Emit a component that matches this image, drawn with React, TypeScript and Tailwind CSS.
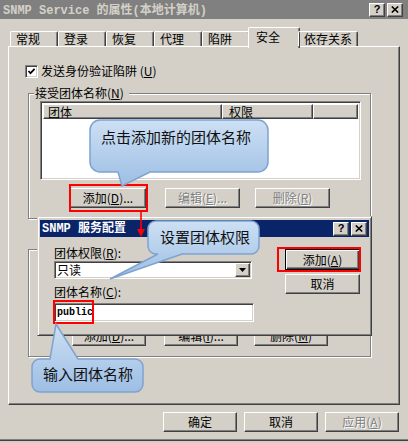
import clsx from "clsx";
import type { ReactNode } from "react";

const raised =
  "border border-t-white border-l-white border-r-[#404040] border-b-[#404040] shadow-[inset_-1px_-1px_#808080]";
const sunken =
  "border border-t-[#808080] border-l-[#808080] border-r-white border-b-white shadow-[inset_1px_1px_#404040,inset_-1px_-1px_#d4d0c8]";
const etched = "border border-[#808080] shadow-[inset_1px_1px_#fff,1px_1px_#fff]";

function Button({
  children,
  w,
  h = "h-[20px]",
  disabled = false,
  primary = false,
}: {
  children: ReactNode;
  w: string;
  h?: string;
  disabled?: boolean;
  primary?: boolean;
}) {
  return (
    <div
      className={clsx(
        "flex items-center justify-center bg-[#d4d0c8] leading-none text-[12px]",
        w,
        h,
        primary
          ? "border border-black shadow-[inset_1px_1px_#fff,inset_-1px_-1px_#404040,inset_-2px_-2px_#808080]"
          : raised,
        disabled && "text-[#808080] [text-shadow:1px_1px_0_#fff]"
      )}
    >
      {children}
    </div>
  );
}

function CaptionButtons() {
  return (
    <div className="ml-auto flex gap-[2px]">
      <div className={clsx("w-[16px] h-[14px] bg-[#d4d0c8] flex items-center justify-center", raised)}>
        <span className="font-bold text-[11px] leading-none font-['Liberation_Sans',sans-serif]">?</span>
      </div>
      <div className={clsx("w-[16px] h-[14px] bg-[#d4d0c8] flex items-center justify-center", raised)}>
        <svg width="8" height="7" viewBox="0 0 8 7">
          <path d="M0.8 0.5 L7.2 6.5 M7.2 0.5 L0.8 6.5" stroke="#000" strokeWidth="1.6" />
        </svg>
      </div>
    </div>
  );
}

const tabs = ["常规", "登录", "恢复", "代理", "陷阱", "安全", "依存关系"];

function HeaderCell({ children, w }: { children?: ReactNode; w: string }) {
  return (
    <div className={clsx("h-full bg-[#d4d0c8] flex items-center pl-[4px] leading-none", w, raised)}>
      {children}
    </div>
  );
}

export default function App() {
  return (
    <div className="relative w-[408px] h-[443px] overflow-hidden bg-[#d4d0c8] text-black text-[12px] font-['Noto_Sans_CJK_SC',sans-serif]">
      {/* title bar */}
      <div className="h-[19px] bg-[#808080] flex items-center pl-[3px] pr-[5px]">
        <span className="pt-[3px] font-bold text-[#d4d0c8] text-[12px] leading-none font-['Liberation_Mono','Noto_Sans_CJK_SC',monospace]">
          SNMP Service 的属性(本地计算机)
        </span>
        <CaptionButtons />
      </div>

      {/* tabs */}
      <div className="relative z-10 flex items-end h-[19px] mt-[8px] pl-[10px]">
        {tabs.map((t) =>
          t === "安全" ? (
            <div
              key={t}
              className="w-[52px] h-[21px] -mx-[2px] -mb-[2px] bg-[#d4d0c8] rounded-t-[2px] border-l border-t border-r border-white border-r-[#404040] shadow-[inset_-1px_0_#808080] pl-[7px] pt-[2px] leading-[14px]"
            >
              {t}
            </div>
          ) : (
            <div
              key={t}
              className={clsx(
                "h-[15px] rounded-t-[2px] border-l border-t border-r border-white border-r-[#404040] shadow-[inset_-1px_0_#808080] pl-[5px] flex items-center leading-none",
                t === "依存关系" ? "w-[60px]" : "w-[48px]"
              )}
            >
              {t}
            </div>
          )
        )}
      </div>

      {/* tab panel */}
      <div className="ml-[8px] w-[392px] h-[359px] border-l border-t border-r border-b border-white border-r-[#404040] border-b-[#404040] shadow-[inset_-1px_-1px_#808080] pt-[17px] pl-[16px]">
        <div className="flex items-center h-[14px] gap-[3px]">
          <div className={clsx("w-[13px] h-[13px] bg-white flex items-center justify-center", sunken)}>
            <svg width="9" height="9" viewBox="0 0 9 9">
              <path d="M1.5 4 L3.5 6.2 L7.6 1.8" stroke="#000" strokeWidth="1.7" fill="none" />
            </svg>
          </div>
          <span className="leading-none">
            发送身份验证陷阱 (<u>U</u>)
          </span>
        </div>

        {/* group 1 */}
        <div className={clsx("mt-[15px] ml-[3px] w-[343px] pb-[10px]", etched)}>
          <div className="w-fit -mt-[8px] ml-[5px] pl-[1px] pr-[5px] leading-[14px] bg-[#d4d0c8]">
            接受团体名称(<u>N</u>)
          </div>
          <div className={clsx("ml-[11px] mt-[1px] w-[321px] h-[79px] bg-white p-[2px]", sunken)}>
            <div className="flex h-[15px]">
              <HeaderCell w="w-[179px]">团体</HeaderCell>
              <HeaderCell w="w-[91px]">
                <span className="pl-[2px]">权限</span>
              </HeaderCell>
              <HeaderCell w="flex-1" />
            </div>
          </div>
          <div className="flex mt-[8px] ml-[41px]">
            <Button w="w-[76px]">
              添加(<u>D</u>)...
            </Button>
            <div className="ml-[19px]">
              <Button w="w-[75px]" disabled>
                编辑(<u>E</u>)...
              </Button>
            </div>
            <div className="ml-[15px]">
              <Button w="w-[75px]" disabled>
                删除(<u>R</u>)
              </Button>
            </div>
          </div>
        </div>

        {/* group 2 (mostly covered) */}
        <div className={clsx("mt-[30px] ml-[3px] w-[343px] h-[108px] flex flex-col justify-end pb-[10px]", etched)}>
          <div className="flex ml-[43px]">
            <Button w="w-[74px]">
              添加(<u>D</u>)...
            </Button>
            <div className="ml-[18px]">
              <Button w="w-[74px]">
                编辑(<u>I</u>)...
              </Button>
            </div>
            <div className="ml-[16px]">
              <Button w="w-[74px]">
                删除(<u>M</u>)
              </Button>
            </div>
          </div>
        </div>
      </div>

      {/* bottom buttons */}
      <div className="flex justify-end gap-[7px] pr-[9px] mt-[7px]">
        <Button w="w-[74px]">确定</Button>
        <Button w="w-[74px]">取消</Button>
        <Button w="w-[74px]" disabled>
          应用(<u>A</u>)
        </Button>
      </div>
      <div className="mt-[7px] h-[2px] border-t border-b border-t-[#808080] border-b-[#404040]" />

      {/* SNMP service config dialog */}
      <div className="absolute z-20 left-[37px] top-[216px] w-[335px] h-[120px] bg-[#d4d0c8] border border-t-[#d4d0c8] border-l-[#d4d0c8] border-r-[#404040] border-b-[#404040] shadow-[inset_1px_1px_#fff,inset_-1px_-1px_#808080] px-[2px] pt-[3px]">
        <div className="h-[17px] bg-[#0a246a] flex items-center pl-[2px] pr-[2px]">
          <span className="text-white font-bold text-[12px] leading-none font-['Liberation_Mono','Noto_Sans_CJK_SC',monospace]">
            SNMP 服务配置
          </span>
          <CaptionButtons />
        </div>
        <div className="flex pl-[14px]">
          <div className="w-[200px] pt-[9px]">
            <div className="leading-[14px]">
              团体权限(<u>R</u>):
            </div>
            <div className={clsx("mt-[1px] w-[198px] h-[18px] bg-white flex items-center pl-[2px] pr-[1px]", sunken)}>
              <span className="leading-none">只读</span>
              <div className={clsx("ml-auto w-[15px] h-[14px] bg-[#d4d0c8] flex items-center justify-center", raised)}>
                <svg width="7" height="4" viewBox="0 0 7 4">
                  <path d="M0 0 H7 L3.5 4 Z" fill="#000" />
                </svg>
              </div>
            </div>
            <div className="mt-[6px] leading-[14px]">
              团体名称(<u>C</u>):
            </div>
            <div className={clsx("mt-[4px] w-[200px] h-[19px] bg-white flex items-center pl-[2px]", sunken)}>
              <span className="font-bold text-[10px] leading-none font-['Liberation_Mono',monospace]">public</span>
            </div>
          </div>
          <div className="ml-[31px] pt-[12px] w-[75px]">
            <Button w="w-[75px]" h="h-[21px]" primary>
              添加(<u>A</u>)
            </Button>
            <div className="mt-[4px]">
              <Button w="w-[75px]">取消</Button>
            </div>
          </div>
        </div>
      </div>

      {/* red highlight boxes */}
      <div className="absolute z-30 left-[69px] top-[184px] w-[79px] h-[28px] border-2 border-[#f00]" />
      <div className="absolute z-30 left-[277px] top-[247px] w-[84px] h-[25px] border-2 border-[#f00]" />
      <div className="absolute z-30 left-[53px] top-[300px] w-[41px] h-[24px] border-2 border-[#f00]" />

      {/* red arrow */}
      <svg className="absolute z-30 left-[134px] top-[211px]" width="14" height="28" viewBox="0 0 14 28">
        <path d="M7 1 V20" stroke="#f00" strokeWidth="1.6" />
        <path d="M3 18 H11 L7 26 Z" fill="#f00" />
      </svg>

      {/* callout 1 */}
      <div className="absolute z-40 left-[88px] top-[118px] w-[182px] h-[70px]">
        <svg className="absolute inset-0" width="182" height="70" viewBox="0 0 182 70">
          <defs>
            <linearGradient id="c1" x1="0" y1="0" x2="0" y2="1">
              <stop offset="0" stopColor="#cde0f4" />
              <stop offset="1" stopColor="#9dbee4" />
            </linearGradient>
          </defs>
          <path
            d="M12 2 H170 A10 10 0 0 1 180 12 V44 A10 10 0 0 1 170 54 H62 L34 68 L30 54 H12 A10 10 0 0 1 2 44 V12 A10 10 0 0 1 12 2 Z"
            fill="url(#c1)"
            stroke="#7ea3cf"
            strokeWidth="1.5"
          />
        </svg>
        <span className="absolute left-[13px] top-[11px] text-[15px] leading-[16px] text-[#111]">点击添加新的团体名称</span>
      </div>

      {/* callout 2 */}
      <div className="absolute z-40 left-[106px] top-[219px] w-[156px] h-[63px]">
        <svg className="absolute inset-0" width="156" height="63" viewBox="0 0 156 63">
          <defs>
            <linearGradient id="c2" x1="0" y1="0" x2="0" y2="1">
              <stop offset="0" stopColor="#cde0f4" />
              <stop offset="1" stopColor="#9dbee4" />
            </linearGradient>
          </defs>
          <path
            d="M50 2 H145 A8 8 0 0 1 153 10 V27 A8 8 0 0 1 145 35 H76 L4 60 L52 35 H50 A8 8 0 0 1 42 27 V10 A8 8 0 0 1 50 2 Z"
            fill="url(#c2)"
            stroke="#7ea3cf"
            strokeWidth="1.5"
          />
        </svg>
        <span className="absolute left-[54px] top-[10px] text-[15px] leading-[16px] text-[#111]">设置团体权限</span>
      </div>

      {/* callout 3 */}
      <div className="absolute z-40 left-[30px] top-[322px] w-[115px] h-[72px]">
        <svg className="absolute inset-0" width="115" height="72" viewBox="0 0 115 72">
          <defs>
            <linearGradient id="c3" x1="0" y1="0" x2="0" y2="1">
              <stop offset="0" stopColor="#cde0f4" />
              <stop offset="1" stopColor="#9dbee4" />
            </linearGradient>
          </defs>
          <path
            d="M10 37 H20 L26 2 L48 37 H105 A8 8 0 0 1 113 45 V62 A8 8 0 0 1 105 70 H10 A8 8 0 0 1 2 62 V45 A8 8 0 0 1 10 37 Z"
            fill="url(#c3)"
            stroke="#7ea3cf"
            strokeWidth="1.5"
          />
        </svg>
        <span className="absolute left-[13px] top-[44px] text-[15px] leading-[16px] text-[#111]">输入团体名称</span>
      </div>
    </div>
  );
}
